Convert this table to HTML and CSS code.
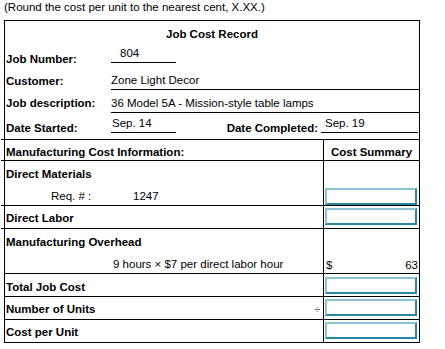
FILE: index.html
```html
<!DOCTYPE html>
<html>
<head>
<meta charset="utf-8">
<link rel="stylesheet" href="styles.css">
</head>
<body>
<p class="note">(Round the cost per unit to the nearest cent, X.XX.)</p>
<div class="record">
  <div class="title">Job Cost Record</div>

  <div class="info-row row-a">
    <div class="label">Job Number:</div>
    <div class="value short">804</div>
  </div>
  <div class="info-row row-b">
    <div class="label">Customer:</div>
    <div class="value wide">Zone Light Decor</div>
  </div>
  <div class="info-row row-c">
    <div class="label">Job description:</div>
    <div class="value wide">36 Model 5A - Mission-style table lamps</div>
  </div>
  <div class="info-row row-d">
    <div class="label">Date Started:</div>
    <div class="value short">Sep. 14</div>
    <div class="spacer"></div>
    <div class="label completed">Date Completed:</div>
    <div class="value done">Sep. 19</div>
  </div>

  <div class="cost-row ext head">
    <div class="desc"><b>Manufacturing Cost Information:</b></div>
    <div class="amt summary">Cost Summary</div>
  </div>
  <div class="cost-row ext tall">
    <div class="desc">
      <b>Direct Materials</b>
      <div class="sub"><span class="req">Req. # :</span><span>1247</span></div>
    </div>
    <div class="amt bottom"><div class="box"></div></div>
  </div>
  <div class="cost-row ext">
    <div class="desc"><b>Direct Labor</b></div>
    <div class="amt"><div class="box"></div></div>
  </div>
  <div class="cost-row ext tall">
    <div class="desc">
      <b>Manufacturing Overhead</b>
      <div class="sub oh">9 hours × $7 per direct labor hour</div>
    </div>
    <div class="amt money"><span>$</span><span>63</span></div>
  </div>
  <div class="cost-row">
    <div class="desc pt6"><b>Total Job Cost</b></div>
    <div class="amt"><div class="box mt3"></div></div>
  </div>
  <div class="cost-row">
    <div class="desc split"><b>Number of Units</b><span class="div">÷</span></div>
    <div class="amt"><div class="box"></div></div>
  </div>
  <div class="cost-row">
    <div class="desc"><b>Cost per Unit</b></div>
    <div class="amt"><div class="box"></div></div>
  </div>
</div>
</body>
</html>
```
FILE: styles.css
```css
html, body {
  margin: 0;
  padding: 0;
  background: #fff;
}
body {
  padding-left: 4px;
  font-family: "Liberation Sans", Arial, sans-serif;
  font-size: 11.5px;
  line-height: 14px;
  color: #000;
}
.note {
  margin: 0 0 6px 0;
}
.record {
  width: 414px;
  border: 1px solid #000;
}
.title {
  height: 24px;
  box-sizing: border-box;
  padding-top: 6px;
  text-align: center;
  font-weight: bold;
}
.info-row {
  display: flex;
  align-items: flex-start;
}
.label {
  width: 106px;
  box-sizing: border-box;
  padding-left: 1px;
  font-weight: bold;
  white-space: nowrap;
}
.value {
  border-bottom: 1px solid #000;
  box-sizing: border-box;
  white-space: nowrap;
}
.value.short { width: 65px; }
.value.wide { flex: 1; }
.spacer { flex: 1; }
.row-a { height: 22px; }
.row-a .label { padding-top: 7px; }
.row-a .value { height: 18px; padding-top: 1px; padding-left: 9px; }
.row-b, .row-c { height: 23px; }
.row-b .label { padding-top: 7px; }
.row-c .label { padding-top: 6px; }
.row-b .value, .row-c .value { height: 23px; padding-top: 6px; }
.row-d { height: 26px; }
.row-d .label { padding-top: 8px; }
.row-d .value { height: 20px; padding-top: 3px; padding-left: 1px; }
.row-d .label.completed { width: auto; padding-right: 3px; }
.row-d .value.done { width: 97px; margin-right: 1px; padding-left: 4px; }

.cost-row {
  display: grid;
  grid-template-columns: 318px 1fr;
  border-top: 1px solid #000;
  height: 23px;
  box-sizing: border-box;
}
.cost-row.ext {
  margin-left: -4px;
  grid-template-columns: 322px 1fr;
}
.cost-row.head { height: 21px; }
.cost-row.tall { height: 45px; }
.desc {
  padding-left: 1px;
  padding-top: 5px;
}
.cost-row.ext .desc { padding-left: 5px; }
.cost-row.tall .desc { padding-top: 6px; }
.desc.pt6 { padding-top: 6px; }
.sub {
  margin-top: 8px;
  display: flex;
}
.sub .req {
  padding-left: 45px;
  width: 82px;
}
.sub.oh { padding-left: 107px; }
.desc.split {
  display: flex;
  justify-content: space-between;
  padding-right: 3px;
}
.div {
  color: #666;
  font-size: 10px;
  padding-top: 1px;
}
.amt {
  border-left: 1px solid #000;
  display: flex;
  flex-direction: column;
}
.amt.summary {
  font-weight: bold;
  text-align: center;
  padding-top: 5px;
}
.amt.bottom { justify-content: flex-end; }
.amt.money {
  flex-direction: row;
  justify-content: space-between;
  align-items: flex-end;
  padding: 0 1px 1px 2px;
}
.box {
  width: 92px;
  height: 17px;
  margin: 2px 0 0 1px;
  box-sizing: border-box;
  border: 2px solid;
  border-color: #8cc3d3 #2a87a2 #2a87a2 #8cc3d3;
  background: #fff;
}
.amt.bottom .box { margin-top: 0; }
.box.mt3 { margin-top: 3px; }
```
